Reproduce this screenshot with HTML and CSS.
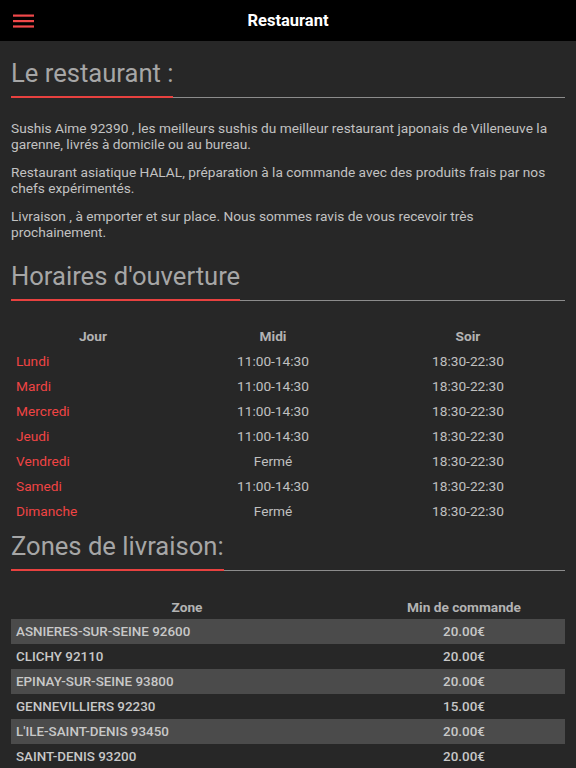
FILE: index.html
```html
<!DOCTYPE html>
<html lang="fr">
<head>
<meta charset="utf-8">
<title>Restaurant</title>
<link rel="stylesheet" href="styles.css">
</head>
<body>
<header class="topbar">
  <div class="menu-btn">
    <svg width="22" height="14" viewBox="0 0 22 14" aria-hidden="true">
      <rect x="0" y="0.5" width="21" height="2.2" fill="#f0484a"/>
      <rect x="0" y="6" width="21" height="2.2" fill="#f0484a"/>
      <rect x="0" y="11.4" width="21" height="2.2" fill="#f0484a"/>
    </svg>
  </div>
  <div class="topbar-title">Restaurant</div>
  <div></div>
</header>
<main class="content">
  <h2 class="title"><span class="title-text">Le restaurant :</span><span class="title-rule"></span></h2>
  <div class="intro">
    <p>Sushis Aime 92390 , les meilleurs sushis du meilleur restaurant japonais de Villeneuve la garenne, livrés à domicile ou au bureau.</p>
    <p>Restaurant asiatique HALAL, préparation à la commande avec des produits frais par nos chefs expérimentés.</p>
    <p>Livraison , à emporter et sur place. Nous sommes ravis de vous recevoir très prochainement.</p>
  </div>

  <h2 class="title"><span class="title-text">Horaires d'ouverture</span><span class="title-rule"></span></h2>
  <table class="hours">
    <thead>
      <tr><th class="c-day">Jour</th><th class="c-mid">Midi</th><th class="c-eve">Soir</th></tr>
    </thead>
    <tbody>
      <tr><td class="day">Lundi</td><td class="time">11:00-14:30</td><td class="time">18:30-22:30</td></tr>
      <tr><td class="day">Mardi</td><td class="time">11:00-14:30</td><td class="time">18:30-22:30</td></tr>
      <tr><td class="day">Mercredi</td><td class="time">11:00-14:30</td><td class="time">18:30-22:30</td></tr>
      <tr><td class="day">Jeudi</td><td class="time">11:00-14:30</td><td class="time">18:30-22:30</td></tr>
      <tr><td class="day">Vendredi</td><td class="time">Fermé</td><td class="time">18:30-22:30</td></tr>
      <tr><td class="day">Samedi</td><td class="time">11:00-14:30</td><td class="time">18:30-22:30</td></tr>
      <tr><td class="day">Dimanche</td><td class="time">Fermé</td><td class="time">18:30-22:30</td></tr>
    </tbody>
  </table>

  <h2 class="title"><span class="title-text">Zones de livraison:</span><span class="title-rule"></span></h2>
  <table class="zones">
    <thead>
      <tr><th class="c-zone">Zone</th><th class="c-min">Min de commande</th></tr>
    </thead>
    <tbody>
      <tr><td class="zone">ASNIERES-SUR-SEINE 92600</td><td class="min">20.00€</td></tr>
      <tr><td class="zone">CLICHY 92110</td><td class="min">20.00€</td></tr>
      <tr><td class="zone">EPINAY-SUR-SEINE 93800</td><td class="min">20.00€</td></tr>
      <tr><td class="zone">GENNEVILLIERS 92230</td><td class="min">15.00€</td></tr>
      <tr><td class="zone">L'ILE-SAINT-DENIS 93450</td><td class="min">20.00€</td></tr>
      <tr><td class="zone">SAINT-DENIS 93200</td><td class="min">20.00€</td></tr>
    </tbody>
  </table>
</main>
</body>
</html>
```
FILE: styles.css
```css
html, body {
  margin: 0;
  padding: 0;
  background: #272727;
  font-family: Roboto, "Liberation Sans", Arial, sans-serif;
  color: #c4c4c4;
}

.topbar {
  height: 41px;
  background: #000;
  display: grid;
  grid-template-columns: 1fr auto 1fr;
  align-items: center;
}

.menu-btn {
  padding-left: 13px;
  display: flex;
  align-items: center;
  height: 41px;
}

.menu-btn svg {
  display: block;
}

.topbar-title {
  color: #fff;
  font-weight: 700;
  font-size: 16.5px;
}

.content {
  padding: 9.5px 11px 0;
}

.title {
  display: flex;
  align-items: flex-end;
  margin: 8px 0 0;
  font-size: 25.6px;
  font-weight: 400;
  line-height: 28px;
  color: #a6a6a6;
}

.title-text {
  padding-bottom: 9px;
  border-bottom: 2px solid #e8413f;
}

.title-rule {
  flex: 1;
  border-bottom: 1px solid #8c8c8c;
}

.intro {
  margin-top: 22.5px;
  padding-bottom: 1.5px;
}

.intro p {
  margin: 0 0 12px;
  font-size: 13.7px;
  line-height: 16px;
  color: #c2c2c2;
}

table {
  width: 100%;
  border-collapse: collapse;
  font-size: 13.7px;
  margin-top: 23px;
}

.zones {
  margin-top: 23.5px;
}

th, td {
  height: 25px;
  padding: 0 5px;
  line-height: 16px;
}

th {
  font-weight: 700;
  color: #b3b3b3;
  text-align: center;
}

.hours .c-day { width: 154px; }
.hours .c-mid { width: 186px; }

.day {
  color: #f04444;
  text-align: left;
}

.time {
  text-align: center;
  color: #c0c0c0;
}

.zones .c-zone { width: 342px; }

.zone {
  text-align: left;
  font-weight: 500;
  font-size: 13.4px;
  color: #c8c8c8;
}

.min {
  text-align: center;
  font-weight: 500;
  font-size: 13.4px;
  color: #c8c8c8;
}

.zones tbody tr:nth-child(odd) {
  background: #4b4b4b;
}
```
